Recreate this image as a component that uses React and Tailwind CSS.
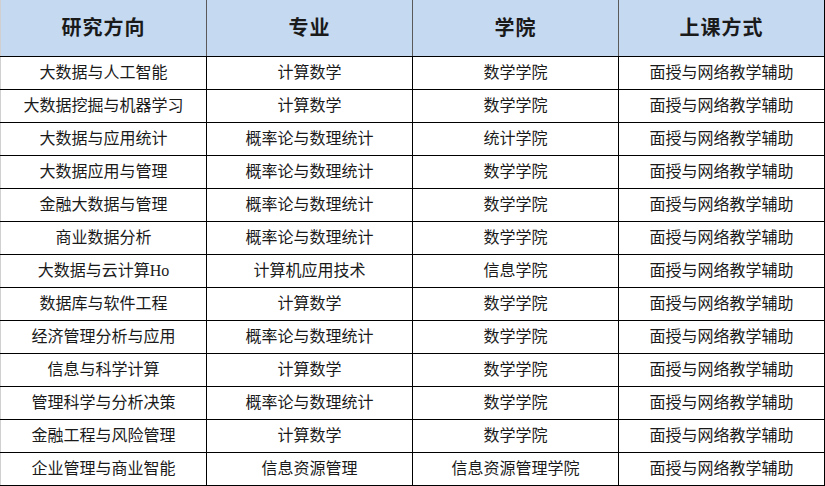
import React from 'react';

const rows = [
  ['大数据与人工智能', '计算数学', '数学学院', '面授与网络教学辅助'],
  ['大数据挖掘与机器学习', '计算数学', '数学学院', '面授与网络教学辅助'],
  ['大数据与应用统计', '概率论与数理统计', '统计学院', '面授与网络教学辅助'],
  ['大数据应用与管理', '概率论与数理统计', '数学学院', '面授与网络教学辅助'],
  ['金融大数据与管理', '概率论与数理统计', '数学学院', '面授与网络教学辅助'],
  ['商业数据分析', '概率论与数理统计', '数学学院', '面授与网络教学辅助'],
  ['大数据与云计算Ho', '计算机应用技术', '信息学院', '面授与网络教学辅助'],
  ['数据库与软件工程', '计算数学', '数学学院', '面授与网络教学辅助'],
  ['经济管理分析与应用', '概率论与数理统计', '数学学院', '面授与网络教学辅助'],
  ['信息与科学计算', '计算数学', '数学学院', '面授与网络教学辅助'],
  ['管理科学与分析决策', '概率论与数理统计', '数学学院', '面授与网络教学辅助'],
  ['金融工程与风险管理', '计算数学', '数学学院', '面授与网络教学辅助'],
  ['企业管理与商业智能', '信息资源管理', '信息资源管理学院', '面授与网络教学辅助'],
];

const headers = ['研究方向', '专业', '学院', '上课方式'];

export default function App() {
  return (
    <div className="w-[825px] h-[486px] bg-white overflow-hidden">
      <table
        className="border-collapse table-fixed w-[824px] text-[#1a1a1a]"
        style={{ fontFamily: '"Liberation Serif", "Noto Sans CJK SC", serif' }}
      >
        <colgroup>
          <col className="w-[206px]" />
          <col className="w-[206px]" />
          <col className="w-[206px]" />
          <col className="w-[206px]" />
        </colgroup>
        <thead>
          <tr className="h-[56px] bg-[#c5d9f1]">
            {headers.map((h, i) => (
              <th
                key={h}
                className={`border-b border-black text-[20px] font-bold tracking-[1px] text-center p-0 ${
                  i === 0 ? 'border-l border-l-[#d0d0d0]' : 'border-l border-l-[#5a5a5a]'
                } ${i === 3 ? 'border-r border-r-black' : ''}`}
              >
                {h}
              </th>
            ))}
          </tr>
        </thead>
        <tbody>
          {rows.map((r, ri) => (
            <tr key={ri} className="h-[33px]">
              {r.map((c, ci) => (
                <td
                  key={ci}
                  className={`border border-black text-[16px] leading-none text-center p-0 ${
                    ci === 0 ? 'border-l-[#d0d0d0]' : ''
                  }`}
                >
                  {c}
                </td>
              ))}
            </tr>
          ))}
        </tbody>
      </table>
    </div>
  );
}
